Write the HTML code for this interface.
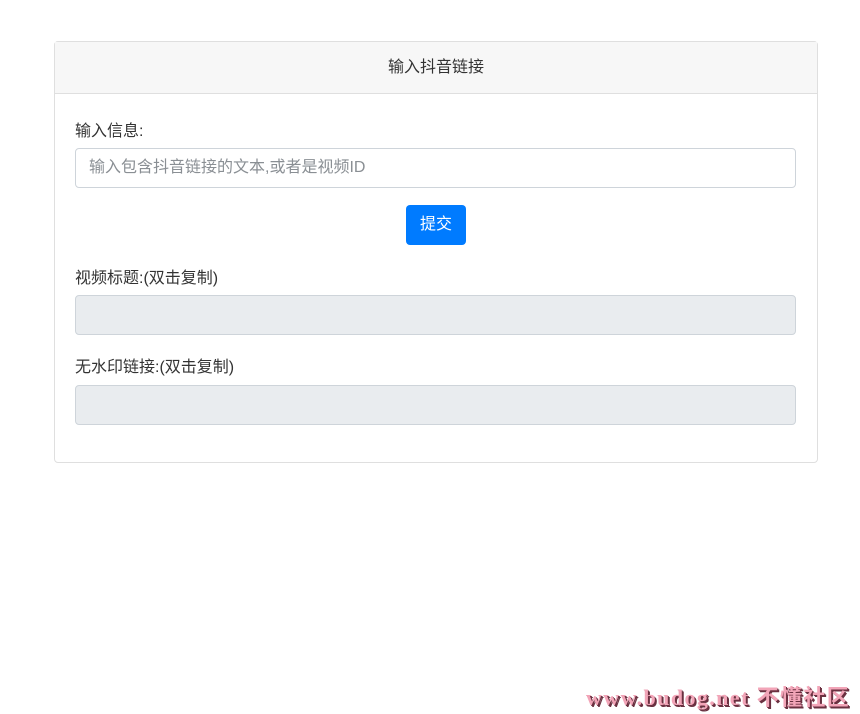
<!DOCTYPE html>
<html><head><meta charset="utf-8"><style>
body{margin:0;background:#fff;font-family:"Liberation Sans","Noto Sans CJK SC",sans-serif;color:#212529;width:860px;height:714px;position:relative;overflow:hidden}
.card{position:absolute;left:54px;top:41px;width:762px;height:420px;border:1px solid #dfdfdf;border-radius:4px}
.hd{height:51px;background:#f7f7f7;border-bottom:1px solid #dfdfdf;text-align:center;line-height:52px;font-size:16px;color:#333}
.lbl{position:absolute;left:20px;font-size:16px;color:#333}
.in{position:absolute;left:20px;width:721px;height:40px;border:1px solid #ced4da;border-radius:4px;box-sizing:border-box}
.ro{background:#e9ecef}
.ph{font-size:16px;color:#8a8f94;line-height:38px;padding-left:13px}
.btn{position:absolute;left:351px;top:163px;width:60px;height:40px;background:#007bff;border-radius:4px;color:#fff;font-size:16px;text-align:center;line-height:40px}
.wm{position:absolute;left:586px;top:680px;font-size:22px;font-weight:bold;color:#f2a5b8;text-shadow:1px 1px 0 #6a3040,2px 2px 0 #6a3040;font-family:"Liberation Serif","Noto Sans CJK SC",serif;letter-spacing:1.4px}
</style></head><body>
<div class="card">
<div class="hd">输入抖音链接</div>
<div class="lbl" style="top:75px">输入信息:</div>
<div class="in" style="top:106px"><div class="ph">输入包含抖音链接的文本,或者是视频ID</div></div>
<div class="btn">提交</div>
<div class="lbl" style="top:222px">视频标题:(双击复制)</div>
<div class="in ro" style="top:253px"></div>
<div class="lbl" style="top:311px">无水印链接:(双击复制)</div>
<div class="in ro" style="top:343px"></div>
</div>
<div class="wm">www.budog.net 不懂社区</div>
</body></html>
